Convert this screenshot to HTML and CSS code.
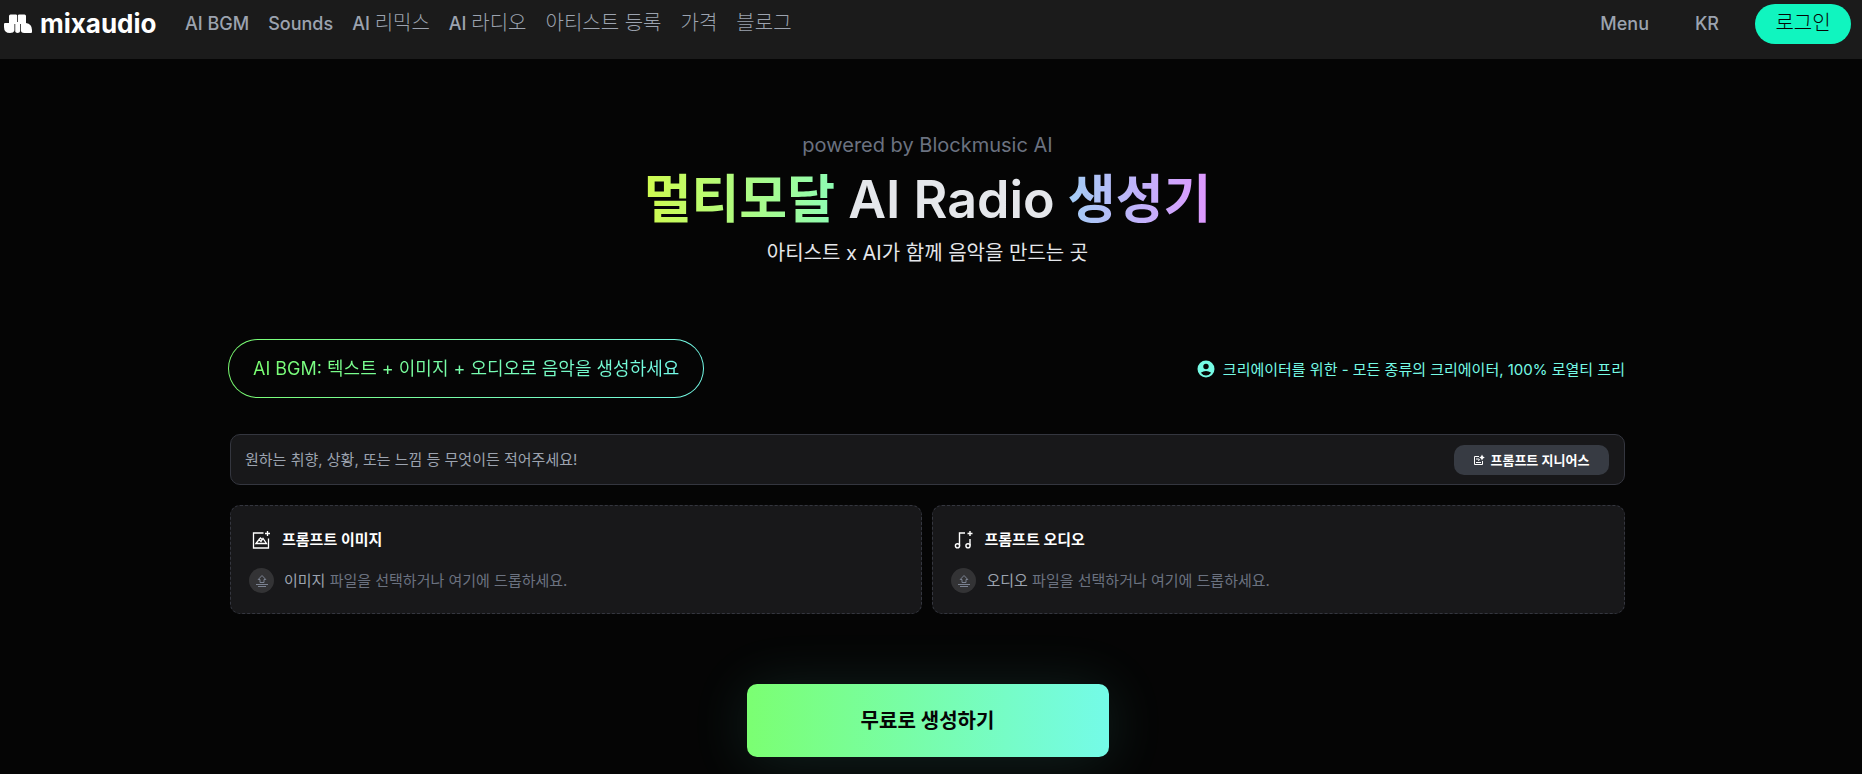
FILE: index.html
```html
<!DOCTYPE html>
<html lang="ko">
<head>
    <meta charset="UTF-8">
    <meta name="viewport" content="width=device-width, initial-scale=1">
    <title>MixAudio</title>
    <link rel="stylesheet" href="styles.css">
</head>
<body>
<header class="header">
    <a class="logo" href="#">
        <svg class="logo-mark" viewBox="0 0 28 19" width="28" height="19" fill="#fff">
            <path d="M5 2Q5 .5 6.500 .5H12Q13.500 .5 13.500 2Q13.500 .5 15 .5H20.500Q22 .5 22 2V9Q28 10 28 16V18Q28 19 27 19H20Q17.500 19 16.500 16.500Q15.800 19 13.500 19Q11.500 19 10.800 16.500Q9.500 19 6 19Q0 19 0 13V10Q0 9 1 9H5Z"/>
            <path d="M13.500 1v7M10.800 10v7M16.500 10v7" fill="none" stroke="#1b1b1b" stroke-width=".8"/>
        </svg>
        <span class="logo-text">mixaudio</span>
    </a>
    <nav class="nav">
        <a href="#">AI BGM</a>
        <a href="#">Sounds</a>
        <a href="#">AI <span class="ko">리믹스</span></a>
        <a href="#">AI <span class="ko">라디오</span></a>
        <a href="#"><span class="ko">아티스트 등록</span></a>
        <a href="#"><span class="ko">가격</span></a>
        <a href="#"><span class="ko">블로그</span></a>
    </nav>
    <div class="account">
        <a href="#">Menu</a>
        <a href="#">KR</a>
        <button class="login ko" type="button">로그인</button>
    </div>
</header>

<main class="main">
    <section class="hero">
        <p class="powered">powered by Blockmusic AI</p>
        <h1><span class="lime">멀티모달</span> AI Radio <span class="violet">생성기</span></h1>
        <p class="slogan">아티스트 x AI가 함께 음악을 만드는 곳</p>
    </section>

    <section class="creator">
        <div class="intro">
            <div class="pill"><span>AI BGM: 텍스트 + 이미지 + 오디오로 음악을 생성하세요</span></div>
            <p class="royalty">
                <svg viewBox="0 0 18 18" width="18" height="18">
                    <circle cx="9" cy="9" r="8.500" fill="#76fbe5"/>
                    <circle cx="9" cy="6.500" r="2.700" fill="#050505"/>
                    <path d="M3.800 12.800q5.200-3.600 10.400 0q-2 2.700-5.200 2.700t-5.200-2.700z" fill="#050505"/>
                </svg>
                크리에이터를 위한 - 모든 종류의 크리에이터, 100% 로열티 프리
            </p>
        </div>

        <form class="prompt">
            <input type="text" aria-label="프롬프트" placeholder="원하는 취향, 상황, 또는 느낌 등 무엇이든 적어주세요!">
            <button class="genius" type="button">
                <svg viewBox="0 0 12 12" width="12" height="12" fill="none" stroke="#fff">
                    <path d="M6 2.500H1.500v8h8V7M3 5h3M3 8.500h5M5 6.500l2-1"/>
                    <path d="M9 .5l1 2 1.800 1-1.800 1-1 2-1-2-1.800-1 1.800-1z" fill="#fff" stroke="none"/>
                </svg>
                프롬프트 지니어스
            </button>
        </form>

        <div class="drops">
            <div class="drop">
                <h2>
                    <svg viewBox="0 0 20 20" width="20" height="20" fill="none" stroke="#fff" stroke-width="1.300">
                        <path d="M12.500 3H2.500v15h15V8.500M16.500 1v5M14 3.500h5"/>
                        <path d="M5 13.500l3-4 2 2 2-3 3.500 5zM8 9.500l1.500-1.500 2 2"/>
                    </svg>
                    프롬프트 이미지
                </h2>
                <p>
                    <span class="upload">
                        <svg viewBox="0 0 12 14" width="12" height="14" fill="none" stroke="#7b8291">
                            <path d="M4 8.500V5.500H2.200L6 1.500l3.800 4H8v3zM0 10.500h12M2 12.500h8"/>
                        </svg>
                    </span>
                    <span><b>이미지</b> 파일을 선택하거나 여기에 드롭하세요.</span>
                </p>
            </div>
            <div class="drop">
                <h2>
                    <svg viewBox="0 0 20 20" width="20" height="20" fill="none" stroke="#fff" stroke-width="1.400">
                        <path d="M6.500 15.500V3H12M17 15.500V9M17 1v5M14.500 3.500h5"/>
                        <circle cx="4.500" cy="15.800" r="2.100"/>
                        <circle cx="15" cy="15.800" r="2.100"/>
                    </svg>
                    프롬프트 오디오
                </h2>
                <p>
                    <span class="upload">
                        <svg viewBox="0 0 12 14" width="12" height="14" fill="none" stroke="#7b8291">
                            <path d="M4 8.500V5.500H2.200L6 1.500l3.800 4H8v3zM0 10.500h12M2 12.500h8"/>
                        </svg>
                    </span>
                    <span><b>오디오</b> 파일을 선택하거나 여기에 드롭하세요.</span>
                </p>
            </div>
        </div>
    </section>

    <button class="generate" type="button">무료로 생성하기</button>
</main>
</body>
</html>
```
FILE: styles.css
```css
*{margin: 0; padding: 0; box-sizing: border-box}
body {
    background: #050505;
    color: #e5e7eb;
    font-family: Inter, "Noto Sans CJK KR", sans-serif;
    font-size: 15px;
}
a {
    color: inherit;
    text-decoration: none;
}
button, input {
    border: 0;
    font-family: inherit;
}
svg {
    display: block;
    flex: none;
}
/* Header */
.header {
    display: flex;
    align-items: center;
    height: 59px;
    padding: 0 11px 12px 4px;
    background: #1b1b1b;
    color: #9ca3af;
    font-size: 18px;
    font-weight: 500;
    line-height: 24px;
    white-space: nowrap;
}
.logo {
    display: flex;
    align-items: center;
    gap: 8px;
    width: 181px;
}
.logo-text {
    color: white;
    font-size: 26px;
    font-weight: 700;
    line-height: 32px;
}
.nav {
    display: flex;
    align-items: baseline;
    gap: 19px;
}
.ko {
    font-size: 20px;
    font-weight: 300;
}
.account {
    display: flex;
    align-items: center;
    gap: 46px;
    margin-left: auto;
}
.login {
    width: 96px;
    height: 40px;
    margin-left: -10px;
    padding-bottom: 4px;
    border-radius: 20px;
    background: #10f5bf;
    color: #050505;
}
/* Hero */
.main {
    padding: 70px 7px 17px 0;
}
.hero {
    text-align: center;
}
.powered {
    color: #6b7280;
    font-size: 20px;
    line-height: 32px;
}
.hero h1 {
    padding-top: 2px;
    font-size: 52px;
    font-weight: 600;
    line-height: 74px;
}
.hero h1 span {
    background-clip: text;
    color: transparent;
}
.hero .lime {
    background-image: linear-gradient(90deg, #d0fb4f, #8efcb4);
}
.hero .violet {
    background-image: linear-gradient(90deg, #a3cdf5, #df97ff);
}
.slogan {
    font-size: 20px;
    line-height: 32px;
}
/* Creator */
.creator {
    width: 75.2%;
    margin: 70px auto 0;
}
.intro {
    display: flex;
    align-items: center;
    justify-content: space-between;
    margin-left: -2px;
}
.pill {
    padding: 0 24px;
    border: 1px solid transparent;
    border-radius: 30px;
    background: linear-gradient(#050505, #050505) padding-box, linear-gradient(90deg, #7bff72, #74fbe8) border-box;
    font-size: 18px;
    line-height: 57px;
}
.pill span {
    background: linear-gradient(90deg, #7bff72, #74fbe8);
    background-clip: text;
    color: transparent;
}
.royalty {
    display: flex;
    align-items: center;
    gap: 8px;
    color: #76fbe5;
}
.prompt {
    display: flex;
    align-items: center;
    height: 51px;
    margin-top: 36px;
    padding: 0 15px 0 14px;
    border: 1px solid #34363f;
    border-radius: 10px;
    background: #18181a;
}
.prompt input {
    flex: 1;
    background: none;
    color: #e5e7eb;
    font-size: 15px;
}
.prompt input::placeholder {
    color: #9ca3af;
}
.genius {
    display: flex;
    align-items: center;
    justify-content: center;
    gap: 5px;
    width: 155px;
    height: 30px;
    border-radius: 10px;
    background: #373b43;
    color: white;
    font-size: 13px;
    font-weight: 600;
}
.drops {
    display: grid;
    grid-template-columns: 1fr 1fr;
    gap: 10px;
    margin-top: 20px;
}
.drop {
    height: 109px;
    padding: 22px 18px;
    border: 1px dashed #34363f;
    border-radius: 10px;
    background: #18181a;
}
.drop h2 {
    display: flex;
    align-items: center;
    gap: 11px;
    padding-left: 2px;
    color: white;
    font-size: 15px;
    font-weight: 600;
    line-height: 24px;
}
.drop p {
    display: flex;
    align-items: center;
    gap: 10px;
    margin-top: 16px;
    color: #6b7280;
    line-height: 25px;
}
.drop b {
    color: #9ca3af;
    font-weight: 400;
}
.upload {
    display: grid;
    place-items: center;
    width: 25px;
    height: 25px;
    border-radius: 50%;
    background: #333335;
}
.generate {
    display: block;
    width: 362px;
    height: 73px;
    margin: 70px auto 0;
    padding-bottom: 2px;
    border-radius: 10px;
    background: linear-gradient(90deg, #7bff72, #74fbe8);
    box-shadow: 0 4px 60px rgba(116, 251, 232, .12);
    color: #050505;
    font-size: 20px;
    font-weight: 600;
}
```
